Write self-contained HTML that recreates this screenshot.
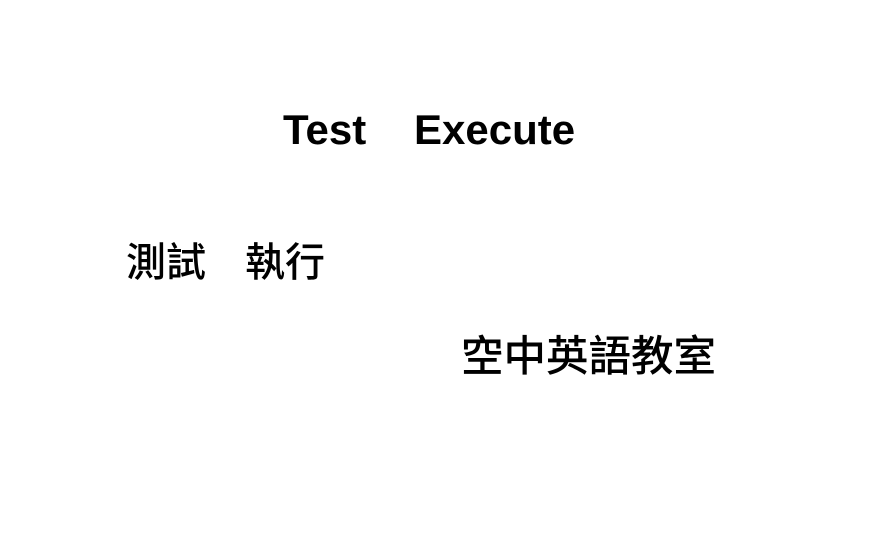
<!DOCTYPE html>
<html><head><meta charset="utf-8"><style>
html,body{margin:0;padding:0;background:#fff;width:888px;height:536px;overflow:hidden}
div{position:absolute;line-height:1;color:#000;white-space:nowrap}
.l{font-family:"Liberation Sans",sans-serif;font-size:42px;font-weight:bold}
.c{font-family:"Liberation Sans","Noto Sans CJK TC",sans-serif;font-weight:500}
</style></head><body>
<div class="l" style="left:283px;top:109px">Test</div>
<div class="l" style="left:414px;top:109px">Execute</div>
<div class="c" style="left:126px;top:243px;font-size:40px">測試</div>
<div class="c" style="left:245px;top:243px;font-size:40px">執行</div>
<div class="c" style="left:461px;top:337px;font-size:42.5px">空中英語教室</div>
</body></html>
